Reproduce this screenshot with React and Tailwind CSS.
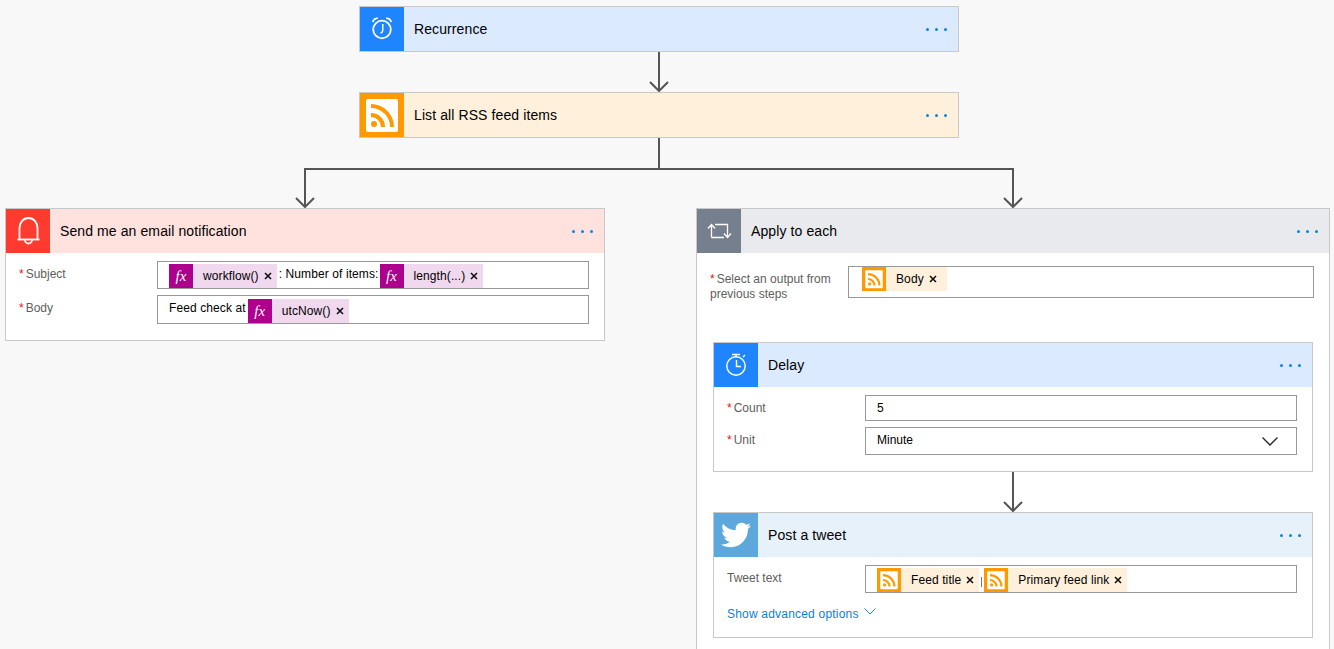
import { FaTwitter } from "react-icons/fa";

const RssIcon = () => (
  <svg viewBox="0 0 44 44" className="size-full bg-[#ff9900]">
    <rect x="6" y="6" width="32" height="33" rx="2" fill="#fff" />
    <circle cx="14" cy="31" r="3" fill="#ff9900" />
    <path d="M11 22a12 12 0 0 1 12 12M11 13a21 21 0 0 1 21 21" fill="none" stroke="#ff9900" strokeWidth="4" />
  </svg>
);

const AlarmIcon = () => (
  <svg viewBox="0 0 44 44" className="size-full" fill="none" stroke="#fff" strokeWidth="1.8">
    <circle cx="22" cy="22.5" r="8.8" />
    <path d="M22.8 17V23c0 1.5-.8 2.6-2.3 3" strokeWidth="1.4" />
    <path d="M12.8 15c.6-2.2 2.6-3.6 5-3.8M31.2 15c-.6-2.2-2.6-3.6-5-3.8" />
  </svg>
);

const BellIcon = () => (
  <svg viewBox="0 0 44 44" className="size-full" fill="none" stroke="#fff" strokeWidth="1.8">
    <path d="M13.5 30V19a9 10 0 0 1 18 0V30" />
    <path d="M11.5 30.5H33.5" />
    <path d="M19 31a3.5 3.5 0 0 0 7 0" />
  </svg>
);

const LoopIcon = () => (
  <svg viewBox="0 0 44 44" className="size-full" fill="none" stroke="#fff" strokeWidth="1.3">
    <path d="M14.5 28.5V16M11 19.5L14.5 15.5L18 19.5" />
    <path d="M14.5 28.5H27M18 15.5H30.5V28" />
    <path d="M27 24.5L30.5 28.5L34 24.5" />
  </svg>
);

const StopwatchIcon = () => (
  <svg viewBox="0 0 44 44" className="size-full" fill="none" stroke="#fff" strokeWidth="1.4">
    <circle cx="22" cy="23" r="9.2" />
    <path d="M18 11.5H26M22 11.5V14M29 14L31 12" />
    <path d="M22.5 17V23.5H27" />
  </svg>
);

const FxIcon = () => (
  <div className="flex size-6 shrink-0 items-center justify-center bg-[#ad008c] font-['Liberation_Serif',serif] text-[15px] italic text-white">
    fx
  </div>
);

const CloseMark = () => (
  <svg viewBox="0 0 8 8" className="size-2 shrink-0" fill="none" stroke="#111" strokeWidth="1.6">
    <path d="M1 1L7 7M7 1L1 7" />
  </svg>
);

const Dots = () => (
  <div className="ml-auto mr-[11px] mt-px flex gap-[6px]">
    <span className="size-[3px] rounded-full bg-[#0a84e0]" />
    <span className="size-[3px] rounded-full bg-[#0a84e0]" />
    <span className="size-[3px] rounded-full bg-[#0a84e0]" />
  </div>
);

const Arrow = () => (
  <div className="flex h-10 justify-center">
    <svg width="20" height="40" fill="none" stroke="#555" strokeWidth="2">
      <path d="M10 0V39M1 30L10 39L19 30" />
    </svg>
  </div>
);

const Card = ({ icon, iconBg, headBg, title, children, className = "" }) => (
  <div className={`border border-[#c8c8c8] ${children ? "bg-white" : ""} ${className}`}>
    <div className={`flex h-11 items-center ${headBg}`}>
      <div className={`size-11 shrink-0 ${iconBg}`}>{icon}</div>
      <span className="ml-[10px] text-[14px] tracking-[0.1px] text-black">{title}</span>
      <Dots />
    </div>
    {children}
  </div>
);

const Field = ({ label, required, children, inputClass }) => (
  <div className="flex items-start pl-[13px] pr-[15px]">
    <div className="w-[138px] shrink-0 pt-[6px] text-[12px] leading-[15px] text-[#605e5c]">
      {required && <span className="mr-[2px] text-[#e81123]">*</span>}
      {label}
    </div>
    <div className={`flex flex-1 border border-[#989898] bg-white pl-[11px] text-[12px] text-black ${inputClass}`}>
      {children}
    </div>
  </div>
);

const Token = ({ icon, bg, text, endClass = "pr-[5px]" }) => (
  <div className={`flex h-6 shrink-0 items-center ${endClass} ${bg}`}>
    <div className="size-6 shrink-0">{icon}</div>
    <span className="ml-[10px] mr-[5px] whitespace-nowrap text-[12px] tracking-[0.1px]">{text}</span>
    <CloseMark />
  </div>
);

const FxToken = ({ text }) => <Token icon={<FxIcon />} bg="bg-[#f0d8ee]" text={text} />;
const RssToken = (props) => <Token icon={<RssIcon />} bg="bg-[#fff0dc]" {...props} />;

export default function App() {
  return (
    <div className="h-[649px] w-[1334px] overflow-hidden bg-[#f8f8f8] pt-[6px] font-['Liberation_Sans',Arial,sans-serif]">
      <div className="ml-[359px] w-[600px]">
        <Card icon={<AlarmIcon />} iconBg="bg-[#1f85ff]" headBg="bg-[#dbeafe]" title="Recurrence" />
        <Arrow />
        <Card icon={<RssIcon />} iconBg="bg-[#ff9900]" headBg="bg-[#fff0dc]" title="List all RSS feed items" />
      </div>

      {/* branch down to the two columns */}
      <svg width="728" height="70" fill="none" stroke="#555" strokeWidth="2" className="ml-[295px]">
        <path d="M364 0V31M10 69V31H718V69" />
        <path d="M1 60L10 69L19 60M709 60L718 69L727 60" />
      </svg>

      <div className="flex items-start gap-[91px] pl-[5px]">
        <Card
          className="w-[600px] pb-4"
          icon={<BellIcon />}
          iconBg="bg-[#ff3b30]"
          headBg="bg-[#ffe1de]"
          title="Send me an email notification"
        >
          <div className="flex flex-col gap-[6px] pt-2">
            <Field label="Subject" required inputClass="h-[28px] items-start pt-[2px]">
              <FxToken text="workflow()" />
              <span className="ml-[2px] mr-[1px] mt-[1px] whitespace-nowrap tracking-[0.1px]">: Number of items:</span>
              <FxToken text="length(...)" />
            </Field>
            <Field label="Body" required inputClass="h-[29px] items-start pt-[3px]">
              <span className="mr-[2px] whitespace-nowrap tracking-[0.1px]">Feed check at</span>
              <FxToken text="utcNow()" />
            </Field>
          </div>
        </Card>

        <Card
          className="w-[634px] pb-6"
          icon={<LoopIcon />}
          iconBg="bg-[#767f8e]"
          headBg="bg-[#e9eaee]"
          title="Apply to each"
        >
          <div className="pt-[13px]">
            <Field label="Select an output from previous steps" required inputClass="h-[32px] items-start">
              <div className="pl-[2px]">
                <RssToken text="Body" endClass="pr-[10px]" />
              </div>
            </Field>
          </div>

          <div className="mx-4 mt-[40px]">
            <Card
              className="pb-4"
              icon={<StopwatchIcon />}
              iconBg="bg-[#1f85ff]"
              headBg="bg-[#dbeafe]"
              title="Delay"
            >
              <div className="flex flex-col gap-[6px] pt-2">
                <Field label="Count" required inputClass="h-[26px] items-center">
                  5
                </Field>
                <Field label="Unit" required inputClass="h-[28px] items-center justify-between">
                  <span className="-mt-[2px]">Minute</span>
                  <svg width="16" height="9" fill="none" stroke="#222" strokeWidth="1.3" className="mr-[18px]">
                    <path d="M0.5 0.5L8 8L15.5 0.5" />
                  </svg>
                </Field>
              </div>
            </Card>
            <Arrow />
            <Card
              className="pb-[15px]"
              icon={<FaTwitter className="size-full p-[7px] text-white" />}
              iconBg="bg-[#5ca8dc]"
              headBg="bg-[#e6f1fa]"
              title="Post a tweet"
            >
              <div className="pt-2">
                <Field label="Tweet text" inputClass="h-[28px] items-start pt-[2px]">
                  <RssToken text="Feed title" />
                  <span className="ml-[2px] mr-[2px] mt-[9px] h-[10px] w-px shrink-0 bg-[#777]" />
                  <RssToken text="Primary feed link" />
                </Field>
                <div className="mt-[13px] flex items-start gap-[5px] pl-[13px] text-[12px] leading-4 tracking-[0.2px] text-[#0a7fdb]">
                  Show advanced options
                  <svg width="12" height="7" fill="none" stroke="#0a7fdb" strokeWidth="0.9" className="mt-[2px]">
                    <path d="M0.5 0.5L6 6L11.5 0.5" />
                  </svg>
                </div>
              </div>
            </Card>
          </div>
        </Card>
      </div>
    </div>
  );
}
